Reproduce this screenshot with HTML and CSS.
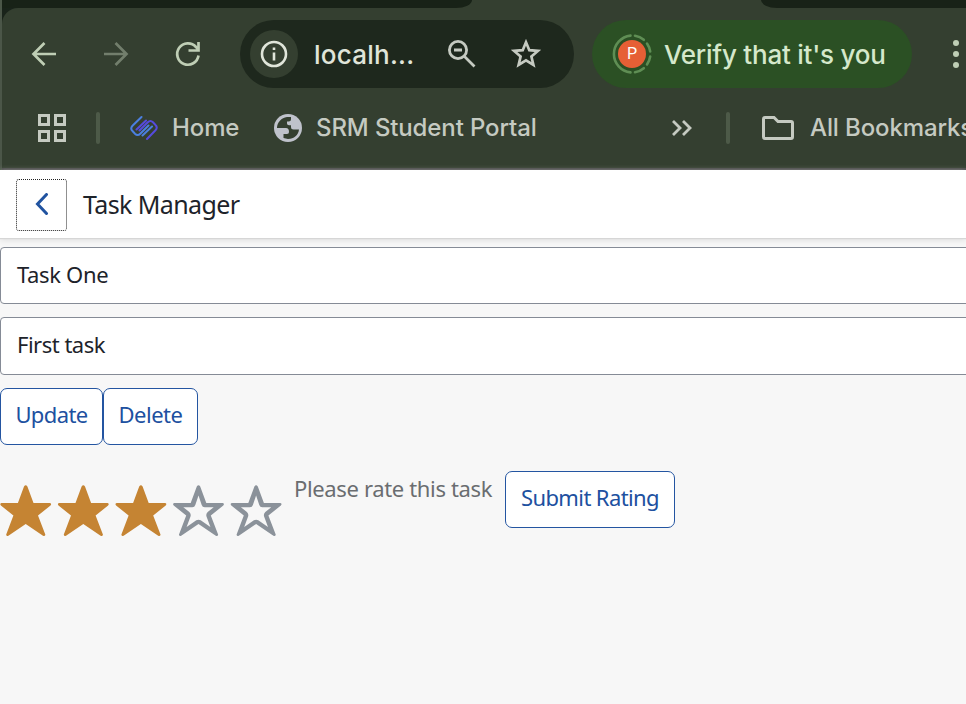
FILE: index.html
```html
<!DOCTYPE html>
<html lang="en">
<head>
<meta charset="utf-8">
<title>Task Manager</title>
<link rel="stylesheet" href="styles.css">
</head>
<body>
<div class="browser">
  <div class="tabs"><span class="tab-gap tab-gap-left"></span><span class="tab-gap tab-gap-right"></span></div>
  <div class="chrome">
    <div class="toolbar">
      <svg class="nav back" width="28" height="28" viewBox="0 0 28 28"><path d="M26 14H4M14.500 3L3.500 14l11 11"/></svg>
      <svg class="nav forward" width="28" height="28" viewBox="0 0 28 28"><path d="M2 14h22M13.500 3l11 11-11 11"/></svg>
      <svg class="nav reload" width="28" height="28" viewBox="0 0 28 28"><path d="M24.500 15.500A10.700 10.700 0 1 1 22 7l2.500 2.500M24.500 2v8.500h-10"/></svg>
      <div class="address">
        <span class="info"><svg width="28" height="28" viewBox="0 0 28 28"><circle cx="14" cy="14" r="12" fill="none" stroke="currentColor" stroke-width="2.600"/><path d="M12.700 12.500h2.600v8h-2.600zM12.700 7.500h2.600v2.600h-2.600z" fill="currentColor"/></svg></span>
        <span class="url">localh...</span>
        <svg class="zoom" width="30" height="30" viewBox="0 0 30 30"><circle cx="11" cy="11" r="8.600"/><path d="M7 11h8M17 17l10.500 10.500"/></svg>
        <svg class="bookmark" width="32" height="32" viewBox="0 0 32 32"><path d="M16 4.300l3.300 7.900 8.600.7-6.500 5.600 2 8.400-7.400-4.500-7.400 4.500 2-8.400-6.500-5.600 8.600-.7z"/></svg>
      </div>
      <div class="profile">
        <span class="ring"><svg width="40" height="40" viewBox="0 0 40 40"><path d="M18.500 1.600A18.500 18.500 0 0 0 18.500 38.400M23 1.800Q28 2.500 31.800 5.800M35 9.500Q37.500 13 38.200 17.500M38.200 22.500Q37.500 27 35 30.500M31.800 34.200Q28 37.500 23 38.200"/></svg><span class="avatar">P</span></span>
        <span class="verify">Verify that it's you</span>
      </div>
      <svg class="menu" width="8" height="32" viewBox="0 0 8 32"><circle cx="4" cy="5" r="3"/><circle cx="4" cy="16" r="3"/><circle cx="4" cy="27" r="3"/></svg>
    </div>
    <div class="bookmarks">
      <svg class="apps" width="28" height="28" viewBox="0 0 28 28"><path d="M1.500 1.500h9v9h-9zM17.500 1.500h9v9h-9zM1.500 17.500h9v9h-9zM17.500 17.500h9v9h-9z"/></svg>
      <span class="divider"></span>
      <svg class="home-logo" width="28" height="26" viewBox="0 0 28 26"><path class="blue" d="M11.500 2L2.500 10.800q-2.500 2.700 0 5.200l2.500 2.700q2.600 2.600 5.200 0L18.500 10.500M12.500 20.500l9.500-9"/><path class="violet" d="M6.500 14.500L16 5.500M17 24l8.500-8.800q2.500-2.700 0-5.200L23 7.300q-2.600-2.600-5.200 0L9.500 15.500"/></svg>
      <span class="label home">Home</span>
      <svg class="globe" width="28" height="28" viewBox="0 0 28 28"><circle cx="14" cy="14" r="14"/><path d="M3 14C3 8.500 7.500 3.500 13 3H17V5Q17 7.500 14.500 7.500H13V9.500Q13 11.300 15 11.300H17V13Q17 15.500 19.500 15.500H25C24.500 21 20 25 14 25L9.500 24V20H13Q15 20 15 18 15 14 12 14Z"/></svg>
      <span class="label srm">SRM Student Portal</span>
      <svg class="more" width="22" height="18" viewBox="0 0 22 18"><path d="M2 2l7 7-7 7M12 2l7 7-7 7"/></svg>
      <span class="divider divider-right"></span>
      <svg class="folder" width="32" height="24" viewBox="0 0 32 24"><path d="M3 1.500h9l4 4h13q1.500 0 1.500 1.500v14q0 1.500-1.500 1.500H3q-1.500 0-1.500-1.500V3q0-1.500 1.500-1.500z"/></svg>
      <span class="label all">All Bookmarks</span>
    </div>
  </div>
</div>
<header class="header">
  <button class="back-button" aria-label="Back"><svg width="16" height="24" viewBox="0 0 16 24"><path d="M12.500 1.500L3.500 11l9 9.500"/></svg></button>
  <h1 class="title">Task Manager</h1>
</header>
<main>
  <div class="field">Task One</div>
  <div class="field second">First task</div>
  <div class="actions"><button class="button update">Update</button><button class="button delete">Delete</button></div>
  <div class="rating">
    <svg class="stars" width="284" height="56" viewBox="0 0 284 56"><defs><path id="star" d="M24 1.500Q25.700-1 27.400 1.500L33.500 18H50Q52 18.500 50.500 20.500L38 30.500 45.300 49.500Q45.500 51.500 43 50.700L25.700 39 8.400 50.700Q6 51.500 6.200 49.500L13.400 30.500.9 20.500Q-.6 18.500 1.400 18h16.500z"/><path id="hollow" fill-rule="evenodd" d="M24 1.500Q25.700-1 27.400 1.500L33.500 18H50Q52 18.500 50.500 20.500L38 30.500 45.300 49.500Q45.500 51.500 43 50.700L25.700 39 8.400 50.700Q6 51.500 6.200 49.500L13.400 30.500.9 20.500Q-.6 18.500 1.400 18h16.500zM25.700 10.500L22.500 20Q21.800 22.200 19.500 22.200H10.500L16.500 27Q18.500 28.800 17.700 31.500L13.800 42 23.500 35.300Q25.700 34 27.900 35.300L37.600 42 33.700 31.500Q32.900 28.800 34.900 27L40.900 22.200H31.900Q29.600 22.200 28.900 20Z"/></defs><g class="filled"><use href="#star"/><use href="#star" x="57.600"/><use href="#star" x="115.200"/></g><g class="empty"><use href="#hollow" x="172.800"/><use href="#hollow" x="230.400"/></g></svg>
    <span class="prompt">Please rate this task</span>
    <button class="button submit">Submit Rating</button>
  </div>
</main>
</body>
</html>
```

FILE: styles.css
```css
* { box-sizing: border-box; }
body { margin: 0; width: 966px; height: 704px; overflow: hidden; background: #f7f7f7; font-family: "Noto Sans", sans-serif; color: #1d232a; }
svg { display: block; flex: none; }
.browser { height: 170px; background: #19231a; font-family: Inter, sans-serif; border-left: 2px solid #4b5648; overflow: hidden; }
.tabs { height: 8px; background: #343f30; display: flex; justify-content: space-between; }
.tab-gap { background: #182217; }
.tab-gap-left { width: 470px; border-bottom-right-radius: 20px 10px; }
.tab-gap-right { width: 205px; border-bottom-left-radius: 20px 10px; }
.chrome { height: 162px; background: #343f30; border-bottom: 2px solid #474747; border-top-left-radius: 16px; overflow: hidden; }
.toolbar { display: flex; align-items: center; height: 68px; margin-top: 12px; width: 980px; }
.nav { fill: none; stroke: #bfceb5; stroke-width: 2.7; }
.back { margin-left: 28px; }
.forward { margin-left: 44px; stroke: #727e6c; }
.reload { margin-left: 44px; }
.address { margin-left: 38px; width: 334px; height: 68px; border-radius: 34px; background: #1e281d; display: flex; align-items: center; padding-left: 10px; flex: none; color: #e0e5da; }
.info { width: 48px; height: 48px; border-radius: 50%; background: #343f30; display: grid; place-items: center; flex: none; }
.url { width: 100px; margin-left: 16px; font-size: 26px; font-weight: 450; white-space: nowrap; letter-spacing: .25px; }
.zoom { margin-left: 33px; fill: none; stroke: #c5cac1; stroke-width: 2.8; }
.bookmark { margin-left: 33px; fill: none; stroke: #c5cac1; stroke-width: 2.7; }
.profile { margin-left: 18px; width: 320px; height: 68px; border-radius: 34px; background: #2b5024; display: flex; align-items: center; flex: none; padding-left: 20px; color: #d5e8cb; }
.ring { width: 40px; height: 40px; display: grid; place-items: center; }
.ring svg, .avatar { grid-area: 1 / 1; }
.ring path { fill: none; stroke: #5f8e54; stroke-width: 2.6; stroke-linecap: round; }
.avatar { width: 28px; height: 28px; border-radius: 50%; background: #e65f35; color: #fff; font: 16px/28px Roboto, sans-serif; text-align: center; }
.verify { margin-left: 12px; font-size: 26px; font-weight: 450; letter-spacing: -.23px; white-space: nowrap; }
.menu { margin-left: 40px; fill: #bfceb5; }
.bookmarks { display: flex; align-items: center; height: 40px; margin-top: 20px; width: 1000px; color: #c5cac1; font-size: 24px; font-weight: 450; letter-spacing: -.12px; white-space: nowrap; }
.apps { margin-left: 36px; fill: none; stroke: #c5cac1; stroke-width: 3; }
.divider { width: 4px; height: 32px; border-radius: 2px; background: #4d5a48; margin-left: 30px; flex: none; }
.home-logo { margin-left: 30px; fill: none; stroke-width: 2; stroke-linecap: round; }
.blue { stroke: #4b7fe0; }
.violet { stroke: #554bdc; }
.label { flex: none; line-height: 30px; margin-bottom: 1px; }
.home { margin-left: 14px; width: 66px; }
.globe { margin-left: 36px; fill: #bfc2cb; }
.globe path { fill: #343f30; }
.srm { margin-left: 14px; width: 221px; }
.more { margin-left: 134px; fill: none; stroke: #c5cac1; stroke-width: 2.8; }
.divider-right { margin-left: 33px; }
.folder { margin-left: 32px; fill: none; stroke: #c5cac1; stroke-width: 3; }
.all { margin-left: 16px; }
.header { height: 68px; display: flex; align-items: center; background: #fff; box-shadow: 0 1px 1px #d6d6d6, 0 2px 6px #ddd; padding: 1px 0 0 16px; }
.back-button { width: 51px; height: 52px; padding: 0; border: 1px dotted #222; border-radius: 3px; background: #fff; display: grid; place-items: center; }
.back-button svg { fill: none; stroke: #2153a0; stroke-width: 3; stroke-linecap: round; }
.title { margin: 0 0 2px 16px; font-size: 25px; font-weight: 400; line-height: 34px; letter-spacing: -.6px; }
.field { margin-top: 9px; height: 57px; width: 980px; border: 1px solid #858b96; border-radius: 4px; background: #fff; padding-left: 16px; font-size: 22px; line-height: 53px; letter-spacing: -.35px; }
.second { margin-top: 13px; height: 58px; letter-spacing: -.5px; }
.actions { display: flex; margin-top: 13px; }
.button { height: 57px; border: 1px solid #2455a1; border-radius: 7px; background: #fff; color: #2050a0; font: 22px/30px "Noto Sans", sans-serif; letter-spacing: -.6px; padding: 0 0 5px; text-align: center; white-space: nowrap; }
.update { width: 103px; }
.delete { width: 95px; letter-spacing: -.5px; }
.rating { display: flex; margin-top: 26px; height: 80px; }
.stars { margin-top: 14px; }
.filled { fill: #c58433; }
.empty { fill: #8b929a; }
.prompt { margin-left: 10px; margin-top: 2px; width: 198px; font-size: 22px; line-height: 30px; letter-spacing: -.35px; color: #6a6d70; white-space: nowrap; }
.submit { margin-left: 13px; width: 170px; }
```
